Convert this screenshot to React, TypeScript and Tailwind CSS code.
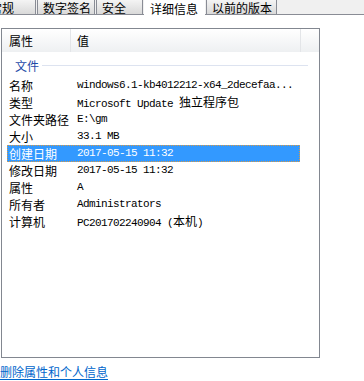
import React from "react"

const cjk = { fontFamily: '"Noto Sans CJK SC", "Liberation Sans", sans-serif' }

type Row = { label: string; value: React.ReactNode }

// chinese bits inside the monospace value column
function Zh({ children }: { children: React.ReactNode }) {
  return (
    <span className="text-[12px] tracking-normal" style={cjk}>
      {children}
    </span>
  )
}

const rows: Row[] = [
  { label: "名称", value: "windows6.1-kb4012212-x64_2decefaa..." },
  {
    label: "类型",
    value: (
      <>
        Microsoft Update <Zh>独立程序包</Zh>
      </>
    ),
  },
  { label: "文件夹路径", value: "E:\\gm" },
  { label: "大小", value: "33.1 MB" },
  { label: "创建日期", value: "2017-05-15 11:32" },
  { label: "修改日期", value: "2017-05-15 11:32" },
  { label: "属性", value: "A" },
  { label: "所有者", value: "Administrators" },
  {
    label: "计算机",
    value: (
      <>
        PC201702240904 (<Zh>本机</Zh>)
      </>
    ),
  },
]

function Tab({ label, width, active }: { label: string; width: string; active?: boolean }) {
  if (active) {
    return (
      <div className={`${width} h-[16px] -mb-px bg-white flex items-center pl-[6px] text-[12px] leading-[13px] text-black`}>
        {label}
      </div>
    )
  }
  return (
    <div
      className={`${width} h-[15px] border border-t-0 border-[#898c95] bg-gradient-to-b from-[#f4f4f4] to-[#d9d9d9] flex items-center pl-[5px] text-[12px] leading-[13px] text-black`}
    >
      {label}
    </div>
  )
}

export default function App() {
  return (
    <div className="w-[364px] h-[381px] bg-white overflow-hidden relative" style={cjk}>
      {/* tab strip */}
      <div className="h-[15px] bg-[#f0f0f0] border-b border-[#898c95] flex items-start">
        <div className="flex -ml-[16px] gap-[1px] items-start">
          <Tab label="常规" width="w-[52px]" />
          <Tab label="数字签名" width="w-[58px]" />
          <Tab label="安全" width="w-[47px]" />
          <Tab label="详细信息" width="w-[61px]" active />
          <Tab label="以前的版本" width="w-[71px]" />
        </div>
      </div>

      {/* list box */}
      <div className="ml-[1px] mt-[13px] w-[319px] h-[330px] border border-[#828790] bg-white">
        {/* header */}
        <div className="h-[23px] flex bg-gradient-to-b from-white to-[#eef0f2] text-[12px] leading-none text-black">
          <div className="w-[69px] pl-[7px] flex items-center border-r border-[#e3e5e8]">属性</div>
          <div className="w-[230px] pl-[6px] flex items-center border-r border-[#e3e5e8]">值</div>
          <div className="flex-1" />
        </div>

        {/* group */}
        <div className="mt-[5px] h-[17px] flex items-center pl-[13px] pr-[11px] gap-[3px]">
          <span className="text-[12px] leading-none text-[#1e4aa8]">文件</span>
          <div className="flex-1 h-px bg-[#dde3f0]" />
        </div>

        {/* rows */}
        <div className="mt-[3px]">
          {rows.map((r) => {
            const sel = r.label === "创建日期"
            return (
              <div
                key={r.label}
                className={`ml-[5px] w-[293px] h-[17px] flex items-center ${
                  sel ? "bg-[#3399ff] text-white outline-1 outline-dotted outline-[#d99a45] -outline-offset-1" : "text-black"
                }`}
              >
                <div className="w-[70px] pl-[2px] text-[12px] leading-none" style={cjk}>
                  {r.label}
                </div>
                <div
                  className="text-[11px] tracking-[-0.6px] leading-none whitespace-nowrap"
                  style={{ fontFamily: '"Liberation Mono", "Noto Sans CJK SC", monospace' }}
                >
                  {r.value}
                </div>
              </div>
            )
          })}
        </div>
      </div>

      {/* link */}
      <div className="mt-[8px] text-[12px] leading-none text-[#0066cc] underline underline-offset-2">
        删除属性和个人信息
      </div>
    </div>
  )
}
